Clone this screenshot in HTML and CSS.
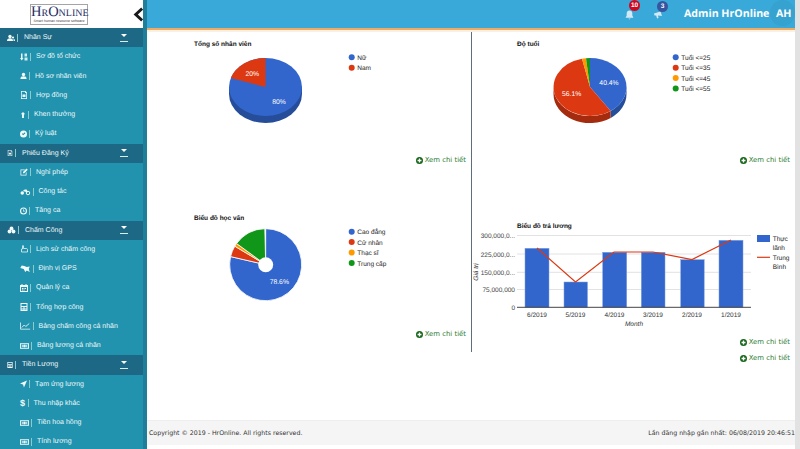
FILE: index.html
```html
<!DOCTYPE html>
<html lang="vi">
<head>
    <meta charset="UTF-8">
    <title>HrOnline</title>
    <link rel="stylesheet" href="styles.css">
</head>
<body>
<svg class="defs" width="0" height="0">
    <symbol id="i-users" viewBox="0 0 16 16"><circle cx="6" cy="5" r="3.4"/><path d="M0 14c0-4 2-5.500 6-5.500s6 1.500 6 5.500z"/><circle cx="12" cy="7" r="2.200"/><path d="M13 14h3c0-3-1-4.500-3.500-4.500 1 1 .5 3 .5 4.500z"/></symbol>
    <symbol id="i-group" viewBox="0 0 16 16"><circle cx="8" cy="5" r="3.800"/><circle cx="4" cy="11" r="3.800"/><circle cx="12" cy="11" r="3.800"/></symbol>
    <symbol id="i-sort" viewBox="0 0 16 16"><path d="M2 1h3v9h2l-3.500 5L0 10h2z"/><path d="M9 1h5v6H9zM9 9h6v6H9z" opacity=".85"/></symbol>
    <symbol id="i-user" viewBox="0 0 16 16"><circle cx="8" cy="4.500" r="3.800"/><path d="M1 15c0-5 2-6.500 7-6.500s7 1.500 7 6.500z"/></symbol>
    <symbol id="i-file" viewBox="0 0 16 16"><path fill-rule="evenodd" d="M2 0h9l3 3v13H2zM3.500 1.500v13h9V4H10V1.500zM5 7h6v5H5z"/></symbol>
    <symbol id="i-up" viewBox="0 0 16 16"><path d="M8 0l6 6h-3.500v10h-5V6H2z"/></symbol>
    <symbol id="i-ban" viewBox="0 0 16 16"><path fill-rule="evenodd" d="M8 0a8 8 0 1 0 0 16A8 8 0 0 0 8 0zM4 8l2-2 1.500 1.500L11 4l1.500 2-5 5z"/></symbol>
    <symbol id="i-note" viewBox="0 0 16 16"><path d="M1 3h9L8.500 4.500h-6v9h9v-4L13 8v7H1z"/><path d="M6 8l7-7 2.500 2.500-7 7H6z"/></symbol>
    <symbol id="i-bike" viewBox="0 0 20 16"><circle cx="4" cy="10" r="3.500"/><circle cx="15.500" cy="10" r="3.500" fill="none" stroke="currentColor" stroke-width="2"/><path d="M5 6l4-3h4l2 6-3-1z"/></symbol>
    <symbol id="i-clock" viewBox="0 0 16 16"><path fill-rule="evenodd" d="M8 0a8 8 0 1 0 0 16A8 8 0 0 0 8 0zm0 2.500a5.500 5.500 0 1 1 0 11 5.500 5.500 0 0 1 0-11zM7 4v5h4V7.500H8.500V4z"/></symbol>
    <symbol id="i-hand" viewBox="0 0 16 16"><path fill="none" stroke="currentColor" stroke-width="1.500" d="M5 8V2a1 1 0 0 1 2 0v5h6c1 0 2 1 2 2v5H3V8z"/></symbol>
    <symbol id="i-map" viewBox="0 0 20 16"><path d="M3 1l5 1 5 2 6-1-2 5 2 6-6-3-3 3-3-6-7-2z"/></symbol>
    <symbol id="i-cal" viewBox="0 0 16 16"><path fill-rule="evenodd" d="M3 0h2v2h6V0h2v2h3v14H0V2h3zM2 6v8h12V6zM4 8h2v2H4zm3 0h2v2H7zm3 0h2v2h-2zm-6 3h2v2H4zm3 0h2v2H7z"/></symbol>
    <symbol id="i-calc" viewBox="0 0 16 16"><path fill-rule="evenodd" d="M1 0h14v16H1zM3 2v4h10V2zM3 8v2h3V8zm4 0v2h2V8zm3 0v2h3V8zm-7 3v2h3v-2zm4 0v2h2v-2zm3 0v2h3v-2z"/></symbol>
    <symbol id="i-chart" viewBox="0 0 20 16"><path d="M0 1h1.500v12.500H20V15H0z"/><path fill="none" stroke="currentColor" stroke-width="1.700" d="M3 11l5-5 3 3 7-6"/></symbol>
    <symbol id="i-money" viewBox="0 0 20 16"><path fill-rule="evenodd" d="M0 2h20v12H0zM2 4v8h16V4zM10 5a3 3 0 1 0 0 6 3 3 0 0 0 0-6zM4 6h2v4H4zm10 0h2v4h-2z"/></symbol>
    <symbol id="i-send" viewBox="0 0 16 16"><path d="M16 0L9 16l-2-7-7-2z"/></symbol>
    <symbol id="i-plus" viewBox="0 0 16 16"><path fill-rule="evenodd" d="M8 0a8 8 0 1 0 0 16A8 8 0 0 0 8 0zM6.500 3.500h3v3h3v3h-3v3h-3v-3h-3v-3h3z"/></symbol>
</svg>

<div class="app">
    <aside class="sidebar">
        <div class="logo-row">
            <div class="logo">
                <div class="logo-name">HrOnline</div>
                <div class="logo-sub">Smart human resource software</div>
            </div>
            <svg class="collapse" viewBox="0 0 12 16" width="11" height="15"><path d="M10 1.500L3 8l7 6.500" fill="none" stroke="#1a1a1a" stroke-width="3.200"/></svg>
        </div>

        <div class="menu-head"><svg class="ico w8"><use href="#i-users"/></svg><i class="sep"></i><span>Nhân Sự</span><b class="caret"></b></div>
        <a class="menu-item"><svg class="ico w8"><use href="#i-sort"/></svg><i class="sep"></i><span>Sơ đồ tổ chức</span></a>
        <a class="menu-item"><svg class="ico w7"><use href="#i-user"/></svg><i class="sep"></i><span>Hồ sơ nhân viên</span></a>
        <a class="menu-item"><svg class="ico w8"><use href="#i-file"/></svg><i class="sep"></i><span>Hợp đồng</span></a>
        <a class="menu-item"><svg class="ico w6"><use href="#i-up"/></svg><i class="sep"></i><span>Khen thưởng</span></a>
        <a class="menu-item"><svg class="ico w7"><use href="#i-ban"/></svg><i class="sep"></i><span>Kỷ luật</span></a>

        <div class="menu-head"><svg class="ico w6"><use href="#i-file"/></svg><i class="sep"></i><span>Phiếu Đăng Ký</span><b class="caret"></b></div>
        <a class="menu-item"><svg class="ico w8"><use href="#i-note"/></svg><i class="sep"></i><span>Nghỉ phép</span></a>
        <a class="menu-item"><svg class="ico w10"><use href="#i-bike"/></svg><i class="sep"></i><span>Công tác</span></a>
        <a class="menu-item"><svg class="ico w7"><use href="#i-clock"/></svg><i class="sep"></i><span>Tăng ca</span></a>

        <div class="menu-head"><svg class="ico w9"><use href="#i-group"/></svg><i class="sep"></i><span>Chấm Công</span><b class="caret"></b></div>
        <a class="menu-item"><svg class="ico w8"><use href="#i-hand"/></svg><i class="sep"></i><span>Lịch sử chấm công</span></a>
        <a class="menu-item"><svg class="ico w10"><use href="#i-map"/></svg><i class="sep"></i><span>Định vị GPS</span></a>
        <a class="menu-item"><svg class="ico w8"><use href="#i-cal"/></svg><i class="sep"></i><span>Quản lý ca</span></a>
        <a class="menu-item"><svg class="ico w8"><use href="#i-calc"/></svg><i class="sep"></i><span>Tổng hợp công</span></a>
        <a class="menu-item"><svg class="ico w10"><use href="#i-chart"/></svg><i class="sep"></i><span>Bảng chấm công cá nhân</span></a>
        <a class="menu-item"><svg class="ico w9"><use href="#i-money"/></svg><i class="sep"></i><span>Bảng lương cá nhân</span></a>

        <div class="menu-head"><svg class="ico w6"><use href="#i-calc"/></svg><i class="sep"></i><span>Tiền Lương</span><b class="caret"></b></div>
        <a class="menu-item"><svg class="ico w7"><use href="#i-send"/></svg><i class="sep"></i><span>Tạm ứng lương</span></a>
        <a class="menu-item"><span class="ico-text">$</span><i class="sep"></i><span>Thu nhập khác</span></a>
        <a class="menu-item"><svg class="ico w9"><use href="#i-money"/></svg><i class="sep"></i><span>Tiền hoa hồng</span></a>
        <a class="menu-item"><svg class="ico w9"><use href="#i-money"/></svg><i class="sep"></i><span>Tính lương</span></a>
    </aside>

    <div class="main">
        <header class="topbar">
            <div class="notify">
                <svg viewBox="0 0 16 16" width="9" height="10" fill="#d3eaf6"><path d="M8 0c3 0 5 2 5 5v4l2 4H1l2-4V5c0-3 2-5 5-5zM6 14h4l-2 2z"/></svg>
                <span class="badge badge-red">10</span>
            </div>
            <div class="notify">
                <svg viewBox="0 0 16 16" width="10" height="8" fill="#d3eaf6"><path d="M0 5l13-4 3 9-8-1 1 5-3 1-1.500-6L1 9z"/></svg>
                <span class="badge badge-blue">3</span>
            </div>
            <div class="user-name">Admin HrOnline</div>
            <div class="avatar">AH</div>
        </header>

        <div class="content">
            <section class="col col-left">
                <svg class="chart" viewBox="147 32 324 123" width="324" height="123">
                    <text class="title" x="194" y="46">Tổng số nhân viên</text>
                    <path fill="#264d99" d="M229 87v7a36.500 29 0 0 0 73 0v-7z"/>
                    <ellipse fill="#3366cc" cx="265.500" cy="87" rx="36.500" ry="29"/>
                    <path fill="#dc3912" d="M265.500 87L230.800 78A36.500 29 0 0 1 265.500 58z"/>
                    <text class="pct" x="279" y="103.500">80%</text>
                    <text class="pct" x="252.300" y="76">20%</text>
                    <circle fill="#3366cc" cx="351.700" cy="57.300" r="3"/>
                    <text class="lbl" x="357.300" y="60">Nữ</text>
                    <circle fill="#dc3912" cx="351.700" cy="67.700" r="3"/>
                    <text class="lbl" x="357.300" y="70.400">Nam</text>
                </svg>
                <a class="more"><svg><use href="#i-plus"/></svg>Xem chi tiết</a>

                <svg class="chart chart-low" viewBox="147 206 324 123" width="324" height="123">
                    <text class="title" x="194" y="220">Biểu đồ học vấn</text>
                    <g stroke="#fff" stroke-width=".8">
                        <path fill="#3366cc" d="M265.700 264.700V228.700A36 36 0 1 1 230.600 256.600z"/>
                        <path fill="#dc3912" d="M265.700 264.700L230.600 256.600A36 36 0 0 1 234.800 246.200z"/>
                        <path fill="#ff9900" d="M265.700 264.700L234.800 246.200A36 36 0 0 1 236.600 243.500z"/>
                        <path fill="#109618" d="M265.700 264.700L236.600 243.500A36 36 0 0 1 264.800 228.700z"/>
                    </g>
                    <circle fill="#fff" cx="265.700" cy="264.700" r="7.500"/>
                    <text class="pct" x="279.300" y="283.800">78.6%</text>
                    <circle fill="#3366cc" cx="351.700" cy="231.700" r="3"/>
                    <text class="lbl" x="357.300" y="234.400">Cao đẳng</text>
                    <circle fill="#dc3912" cx="351.700" cy="242" r="3"/>
                    <text class="lbl" x="357.300" y="244.700">Cử nhân</text>
                    <circle fill="#ff9900" cx="351.700" cy="252.500" r="3"/>
                    <text class="lbl" x="357.300" y="255.200">Thạc sĩ</text>
                    <circle fill="#109618" cx="351.700" cy="263" r="3"/>
                    <text class="lbl" x="357.300" y="265.700">Trung cấp</text>
                </svg>
                <a class="more"><svg><use href="#i-plus"/></svg>Xem chi tiết</a>
            </section>

            <section class="col">
                <svg class="chart" viewBox="472 32 323 123" width="323" height="123">
                    <text class="title" x="517" y="46">Độ tuổi</text>
                    <path fill="#264d99" d="M626.500 87v7A36.500 29 0 0 1 610.700 117.900v-7A36.500 29 0 0 0 626.500 87z"/>
                    <path fill="#a52b0e" d="M610.700 110.900v7A36.500 29 0 0 1 553.500 94v-7A36.500 29 0 0 0 610.700 110.900z"/>
                    <path fill="#3366cc" d="M590 87V58A36.500 29 0 0 1 610.700 110.900z"/>
                    <path fill="#dc3912" d="M590 87L610.700 110.900A36.500 29 0 1 1 582 58.700z"/>
                    <path fill="#ff9900" d="M590 87L582 58.700A36.500 29 0 0 1 586 58.200z"/>
                    <path fill="#109618" d="M590 87L586 58.200A36.500 29 0 0 1 590 58z"/>
                    <text class="pct" x="609" y="85">40.4%</text>
                    <text class="pct" x="571.700" y="96">56.1%</text>
                    <circle fill="#3366cc" cx="675.700" cy="57.300" r="3"/>
                    <text class="lbl" x="681.300" y="60">Tuổi &lt;=25</text>
                    <circle fill="#dc3912" cx="675.700" cy="67.700" r="3"/>
                    <text class="lbl" x="681.300" y="70.400">Tuổi &lt;=35</text>
                    <circle fill="#ff9900" cx="675.700" cy="78" r="3"/>
                    <text class="lbl" x="681.300" y="80.700">Tuổi &lt;=45</text>
                    <circle fill="#109618" cx="675.700" cy="88.600" r="3"/>
                    <text class="lbl" x="681.300" y="91.300">Tuổi &lt;=55</text>
                </svg>
                <a class="more"><svg><use href="#i-plus"/></svg>Xem chi tiết</a>

                <svg class="chart chart-low" viewBox="472 206 323 131" width="323" height="131">
                    <text class="title" x="517" y="228">Biểu đồ trả lương</text>
                    <g stroke="#e2e2e2" stroke-width="1">
                        <path d="M517 235.500H751M517 254H751M517 272.300H751M517 289.500H751"/>
                    </g>
                    <g fill="#3366cc" stroke="#7f9fe0" stroke-width=".5">
                        <rect x="525" y="248.300" width="24" height="59"/>
                        <rect x="564" y="282" width="23.500" height="25.300"/>
                        <rect x="602.700" y="252.300" width="24" height="55"/>
                        <rect x="641.300" y="252.300" width="23.700" height="55"/>
                        <rect x="680.700" y="259.700" width="23.500" height="47.600"/>
                        <rect x="719" y="240.300" width="24" height="67"/>
                    </g>
                    <path d="M517 307.300H751" stroke="#444" stroke-width="1"/>
                    <polyline fill="none" stroke="#dc3912" stroke-width="1.200" points="537,248 575.500,282 614,252 653,252 692,259.500 731,240"/>
                    <g class="axis">
                        <text x="515" y="238">300,000,0...</text>
                        <text x="515" y="256.500">225,000,0...</text>
                        <text x="515" y="274.800">150,000,0...</text>
                        <text x="515" y="292">75,000,000</text>
                        <text x="515" y="309.800">0</text>
                    </g>
                    <g class="ticks">
                        <text x="537" y="317">6/2019</text>
                        <text x="575.500" y="317">5/2019</text>
                        <text x="614.500" y="317">4/2019</text>
                        <text x="653" y="317">3/2019</text>
                        <text x="692" y="317">2/2019</text>
                        <text x="731" y="317">1/2019</text>
                        <text class="it" x="634" y="326.300">Month</text>
                        <text class="it" transform="translate(478 272) rotate(-90)">Giá trị</text>
                    </g>
                    <rect fill="#3366cc" x="757" y="235" width="13" height="7"/>
                    <text class="lbl" x="772.700" y="241">Thực</text>
                    <text class="lbl" x="772.700" y="249.500">lãnh</text>
                    <path d="M757 257.300H770" stroke="#dc3912" stroke-width="1.200"/>
                    <text class="lbl" x="772.700" y="260">Trung</text>
                    <text class="lbl" x="772.700" y="268.500">Bình</text>
                </svg>
                <a class="more"><svg><use href="#i-plus"/></svg>Xem chi tiết</a>
                <a class="more more-next"><svg><use href="#i-plus"/></svg>Xem chi tiết</a>
            </section>
        </div>

        <footer class="footer">
            <span>Copyright © 2019 - HrOnline. All rights reserved.</span>
            <span>Lần đăng nhập gần nhất: 06/08/2019 20:46:51</span>
        </footer>
    </div>
</div>
</body>
</html>
```

FILE: styles.css
```css
* {
    box-sizing: border-box;
}
body {
    margin: 0;
    font-family: "Liberation Sans", Arial, sans-serif;
    text-rendering: geometricPrecision;
    background: white;
}
.defs {
    position: absolute;
}
.app {
    display: flex;
    width: 800px;
    height: 449px;
    overflow: hidden;
}

/* sidebar */
.sidebar {
    width: 147px;
    flex-shrink: 0;
    overflow: hidden;
    background-color: #2193ae;
    border-right: 4px solid #1f7f9b;
    color: #eef8fa;
    font-size: 7px;
}
.logo-row {
    display: flex;
    align-items: center;
    height: 28px;
    width: 147px;
    padding-left: 30px;
    background-color: white;
}
.logo {
    width: 58px;
    height: 21px;
    border: 1px solid #a5a5a5;
    text-align: center;
    color: #1f2f66;
}
.logo-name {
    font-family: "Liberation Serif", serif;
    font-variant: small-caps;
    font-size: 14.5px;
    line-height: 14px;
}
.logo-sub {
    font-size: 3.6px;
    line-height: 5px;
    color: #444;
}
.collapse {
    margin-left: 45px;
}
.menu-head,
.menu-item {
    display: flex;
    align-items: center;
    height: 19.25px;
}
.menu-head {
    padding-left: 7px;
    background-color: #1d6985;
}
.menu-head .sep {
    margin-right: 6px;
}
.menu-item {
    padding-left: 20px;
}
.ico {
    height: 8px;
    fill: #f4fafb;
    color: #f4fafb;
    flex-shrink: 0;
}
.w6 { width: 6px; }
.w7 { width: 7px; }
.w8 { width: 8px; }
.w9 { width: 9px; }
.w10 { width: 10.5px; }
.ico-text {
    width: 5.500px;
    font-weight: bold;
    font-size: 9px;
    color: #f4fafb;
}
.sep {
    width: 1px;
    height: 8px;
    margin: 0 5px 0 2px;
    background-color: #8fc9c9;
}
.caret {
    position: relative;
    width: 8px;
    height: 8px;
    margin-left: auto;
    margin-right: 15px;
    border-bottom: 1px solid #d8eee8;
}
.caret::before {
    content: "";
    position: absolute;
    top: 0;
    left: 1px;
    border-style: solid;
    border-width: 3px 3px 0;
    border-color: white transparent transparent;
}

/* top */
.main {
    width: 653px;
    display: flex;
    flex-direction: column;
    border-right: 5px solid #e2e2e2;
}
.topbar {
    display: flex;
    align-items: center;
    height: 30px;
    padding-left: 478px;
    background-color: #38a9d8;
    border-bottom: 2px solid #f0aa62;
    color: white;
}
.notify {
    position: relative;
    display: flex;
    width: 28px;
    margin-top: 1px;
}
.badge {
    position: absolute;
    top: -10px;
    left: 4px;
    width: 11px;
    height: 11px;
    border-radius: 50%;
    font-size: 6.500px;
    font-weight: bold;
    line-height: 11px;
    text-align: center;
}
.badge-red {
    background-color: #d2071f;
}
.badge-blue {
    background-color: #37549f;
}
.user-name {
    font-family: "Open Sans", sans-serif;
    font-weight: bold;
    font-size: 10.600px;
    width: 86px;
    margin-left: 3px;
    white-space: nowrap;
}
.avatar {
    width: 25px;
    height: 26px;
    border-radius: 50%;
    background-color: #35a2d0;
    font-family: "Open Sans", sans-serif;
    font-weight: bold;
    font-size: 10.600px;
    line-height: 28px;
    padding-left: 6px;
    margin-top: -3px;
}

/* charts */
.content {
    flex: 1;
    display: grid;
    grid-template-columns: 325px 323px;
    align-items: start;
    border-top: 2px solid #fbf0e4;
}
.col-left {
    height: 320px;
    border-right: 1px solid #5f6f78;
}
.chart {
    display: block;
}
.chart-low {
    margin-top: 41px;
}
.chart text {
    font-family: "Liberation Sans", Arial, sans-serif;
    font-size: 6.500px;
    fill: #222;
}
.chart .title {
    font-size: 6.500px;
    font-weight: bold;
    fill: #111;
}
.chart .pct {
    fill: white;
    font-size: 6.800px;
    text-anchor: middle;
}
.axis text {
    text-anchor: end;
    fill: #444;
}
.ticks text {
    text-anchor: middle;
    fill: #333;
}
.chart .it {
    font-style: italic;
}
.more {
    display: flex;
    justify-content: flex-end;
    align-items: center;
    gap: 1.500px;
    height: 10px;
    padding-right: 5px;
    font-family: "DejaVu Sans", sans-serif;
    font-size: 6.900px;
    color: #2e7d32;
}
.more svg {
    width: 7px;
    height: 7px;
    fill: #17661c;
}
.more-next {
    margin-top: 6px;
}

/* footer */
.footer {
    display: flex;
    justify-content: space-between;
    align-items: center;
    height: 25px;
    margin-bottom: 4px;
    padding: 0 0 0 2px;
    background-color: #f5f5f5;
    border-top: 1px solid #eeeeee;
    font-family: "DejaVu Sans", sans-serif;
    font-size: 6.250px;
    color: #333;
}
```
